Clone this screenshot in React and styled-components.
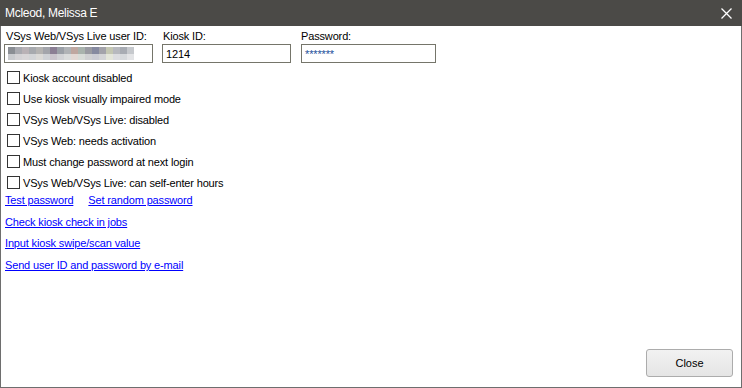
import React from 'react';
import styled, { createGlobalStyle } from 'styled-components';

const GlobalStyle = createGlobalStyle`
  html, body {
    margin: 0;
    padding: 0;
    background: #ffffff;
  }
  body {
    font-family: "Liberation Sans", Arial, sans-serif;
  }
`;

const Window = styled.div`
  width: 742px;
  height: 388px;
  box-sizing: border-box;
  border: 1px solid #6e6e6e;
  border-top: none;
  display: flex;
  flex-direction: column;
  background: #ffffff;
`;

const TitleBar = styled.div`
  height: 26px;
  background: #4b4a47;
  color: #ffffff;
  display: flex;
  align-items: center;
  justify-content: space-between;
  padding: 0 8px 0 5px;
  margin: 0 -1px;
  font-family: "Liberation Sans", sans-serif;
  font-size: 12px;
  letter-spacing: -0.3px;
`;

const CloseX = styled.svg`
  width: 11px;
  height: 11px;
  margin-right: 2px;
`;

const Body = styled.div`
  flex: 1;
  display: flex;
  flex-direction: column;
  padding: 4px 3px 10px 3px;
  font-family: "Liberation Sans", Arial, sans-serif;
  font-size: 11px;
  letter-spacing: -0.15px;
  color: #000000;
  white-space: nowrap;
`;

const FieldRow = styled.div`
  display: flex;
  gap: 9px;
`;

const Field = styled.div`
  display: flex;
  flex-direction: column;
  width: ${(p) => p.$w}px;
  margin-left: ${(p) => p.$ml || 0}px;
`;

const Label = styled.div`
  height: 13px;
  padding-left: ${(p) => p.$pl || 0}px;
  margin-bottom: 1px;
`;

const TextBox = styled.div`
  box-sizing: border-box;
  height: 19px;
  border: 1px solid #75756a;
  padding: 2px 3px;
  display: flex;
  align-items: center;
  overflow: hidden;
  color: ${(p) => p.$color || '#000'};
`;

const Mosaic = styled.div`
  display: flex;
  height: 13px;
`;

const Pixel = styled.div`
  width: 7px;
  height: 13px;
  background: linear-gradient(${(p) => p.$c} 50%, ${(p) => p.$d} 50%);
`;

const CheckList = styled.div`
  display: flex;
  flex-direction: column;
  gap: 8px;
  margin-top: 8px;
  padding-left: 3px;
`;

const CheckRow = styled.label`
  display: flex;
  align-items: center;
  gap: 3px;
  height: 13px;
`;

const Box = styled.span`
  box-sizing: border-box;
  width: 13px;
  height: 13px;
  border: 1px solid #333333;
  background: #ffffff;
`;

const LinkRow = styled.div`
  display: flex;
  gap: 15px;
  margin-top: ${(p) => p.$mt}px;
  padding-left: 1px;
`;

const Link = styled.a`
  color: #0000ff;
  text-decoration: underline;
  cursor: pointer;
`;

const Footer = styled.div`
  margin-top: auto;
  display: flex;
  justify-content: flex-end;
  padding-right: 5px;
`;

const Button = styled.button`
  width: 87px;
  height: 28px;
  border: 1px solid #acacac;
  border-radius: 3px;
  background: linear-gradient(#f2f2f2, #e5e5e5);
  font-family: "Liberation Sans", Arial, sans-serif;
  font-size: 11px;
  color: #000;
`;

const mosaic = [
  ['#8a8e94', '#c9cbcf'], ['#a9aab0', '#d4d3d6'], ['#b9b2b6', '#d8d6d8'], ['#a7aaae', '#d3d5d7'],
  ['#b5b4b2', '#dbdad7'], ['#a3a5ab', '#cfd2d6'], ['#8b7f94', '#cac5cd'], ['#9ba0a7', '#d2d3d6'],
  ['#b0b3b6', '#dadcdc'], ['#bfa7a0', '#e2d8d4'], ['#a9b3ad', '#d8dcd8'], ['#9a9ba2', '#d0d1d3'],
  ['#868aa0', '#cbccd4'], ['#a3a3aa', '#d3d4d6'], ['#c4c7b3', '#e4e6da'], ['#b7b9be', '#dcdde0'],
  ['#a8acb3', '#d6d9dc'], ['#c6c9cd', '#e3e4e6'],
];

const checks = [
  'Kiosk account disabled',
  'Use kiosk visually impaired mode',
  'VSys Web/VSys Live: disabled',
  'VSys Web: needs activation',
  'Must change password at next login',
  'VSys Web/VSys Live: can self-enter hours',
];

const App = () => (
  <>
    <GlobalStyle />
    <Window>
      <TitleBar>
        <span>Mcleod, Melissa E</span>
        <CloseX viewBox="0 0 11 11">
          <path d="M0.5 0.5 L10.5 10.5 M10.5 0.5 L0.5 10.5" stroke="#ffffff" strokeWidth="1.3" />
        </CloseX>
      </TitleBar>
      <Body>
        <FieldRow>
          <Field $w={149}>
            <Label $pl={2}>VSys Web/VSys Live user ID:</Label>
            <TextBox>
              <Mosaic>
                {mosaic.map(([c, d], i) => (
                  <Pixel key={i} $c={c} $d={d} />
                ))}
              </Mosaic>
            </TextBox>
          </Field>
          <Field $w={129}>
            <Label $pl={1}>Kiosk ID:</Label>
            <TextBox>1214</TextBox>
          </Field>
          <Field $w={135} $ml={1}>
            <Label>Password:</Label>
            <TextBox $color="#1c4f9a">*******</TextBox>
          </Field>
        </FieldRow>
        <CheckList>
          {checks.map((c) => (
            <CheckRow key={c}>
              <Box />
              <span>{c}</span>
            </CheckRow>
          ))}
        </CheckList>
        <LinkRow $mt={5}>
          <Link>Test password</Link>
          <Link>Set random password</Link>
        </LinkRow>
        <LinkRow $mt={10}>
          <Link>Check kiosk check in jobs</Link>
        </LinkRow>
        <LinkRow $mt={9}>
          <Link>Input kiosk swipe/scan value</Link>
        </LinkRow>
        <LinkRow $mt={10}>
          <Link>Send user ID and password by e-mail</Link>
        </LinkRow>
        <Footer>
          <Button>Close</Button>
        </Footer>
      </Body>
    </Window>
  </>
);

export default App;
